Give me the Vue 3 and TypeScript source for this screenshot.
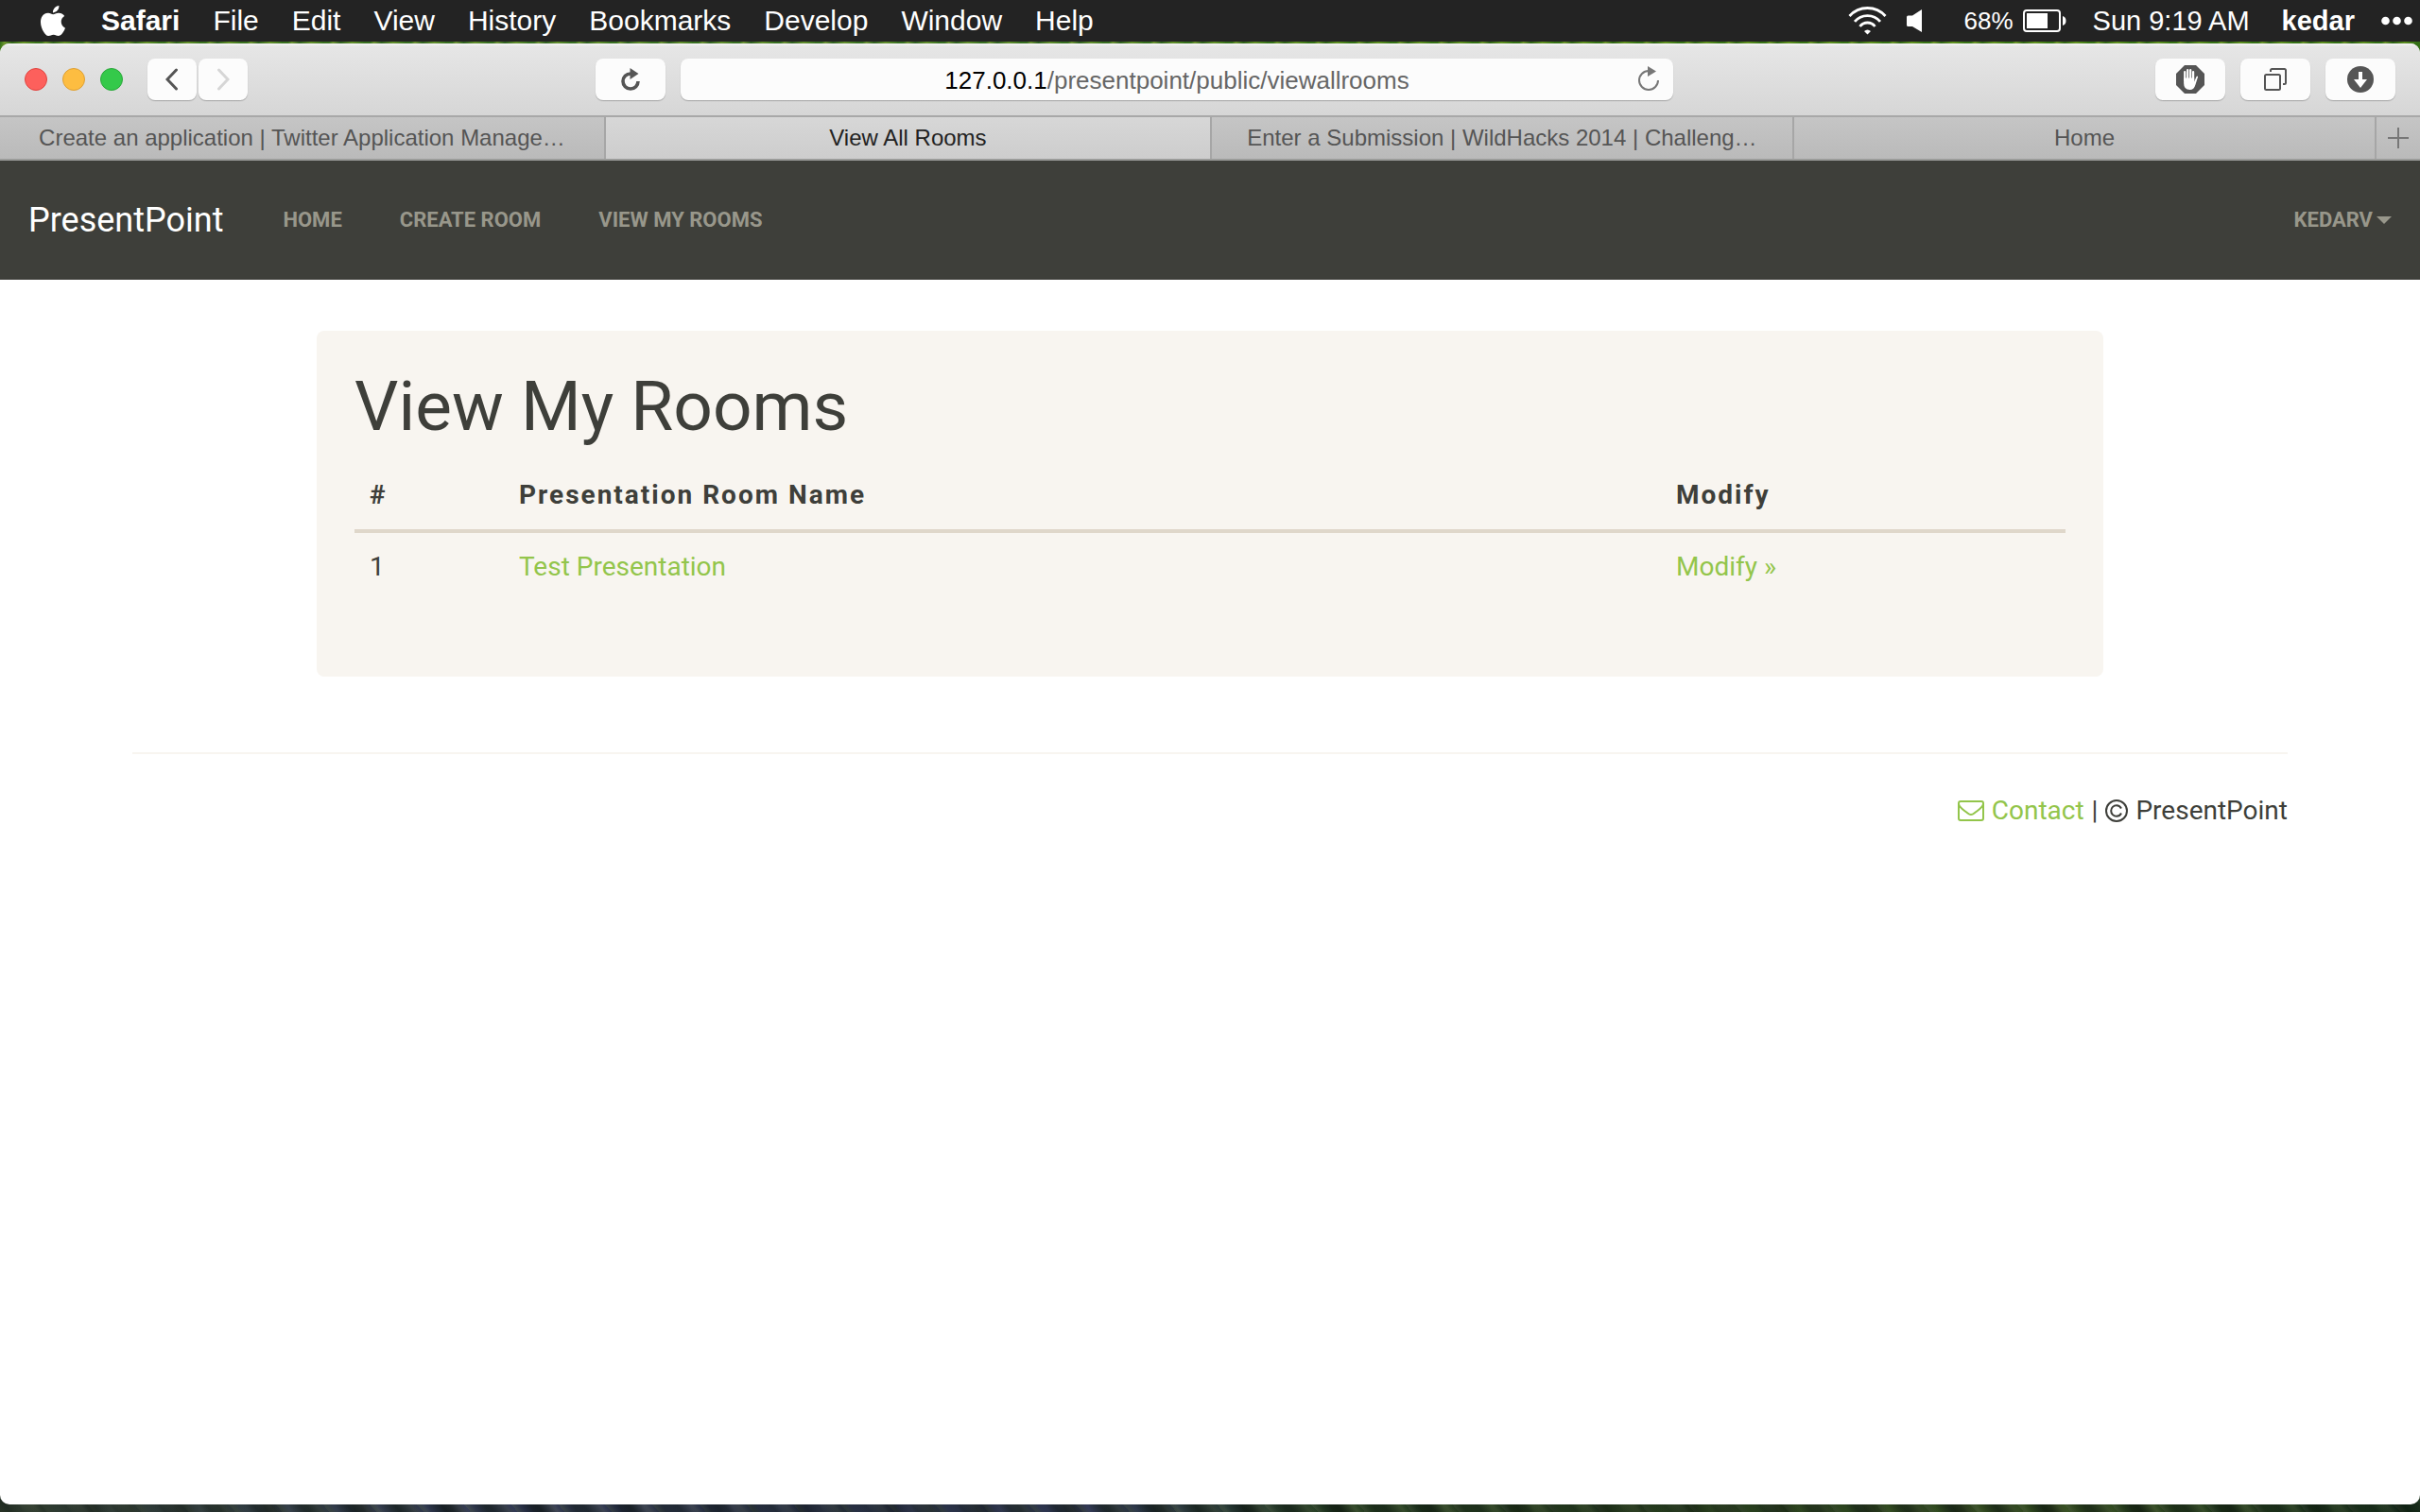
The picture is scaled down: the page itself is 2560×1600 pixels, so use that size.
<script setup lang="ts">
import { ref } from 'vue'

interface Tab {
  title: string
  size: 'wide' | 'narrow'
}

interface Room {
  id: number
  name: string
}

const menus: string[] = ['File', 'Edit', 'View', 'History', 'Bookmarks', 'Develop', 'Window', 'Help']

const tabs: Tab[] = [
  { title: 'Create an application | Twitter Application Manage…', size: 'wide' },
  { title: 'View All Rooms', size: 'wide' },
  { title: 'Enter a Submission | WildHacks 2014 | Challeng…', size: 'narrow' },
  { title: 'Home', size: 'narrow' },
]
const activeTab = ref(1)

const path = ref('/presentpoint/public/viewallrooms')

const navLinks: string[] = ['Home', 'Create Room', 'View My Rooms']

const rooms: Room[] = [{ id: 1, name: 'Test Presentation' }]
</script>

<template>
  <div class="desktop">
    <header class="menubar">
      <nav class="menus" aria-label="Application menu">
        <button class="menu apple" type="button" aria-label="Apple menu">
          <svg width="32" height="32" viewBox="0 0 24 24" fill="#fff">
            <path d="M12.152 6.896c-.948 0-2.415-1.078-3.96-1.04-2.04.027-3.91 1.183-4.961 3.014-2.117 3.675-.546 9.103 1.519 12.09 1.013 1.454 2.208 3.09 3.792 3.039 1.52-.065 2.09-.987 3.935-.987 1.831 0 2.35.987 3.96.948 1.637-.026 2.676-1.48 3.676-2.948 1.156-1.688 1.636-3.325 1.662-3.415-.039-.013-3.182-1.221-3.22-4.857-.026-3.04 2.48-4.494 2.597-4.559-1.429-2.09-3.623-2.324-4.39-2.376-2-.156-3.675 1.09-4.61 1.09zM15.53 3.83c.843-1.012 1.4-2.427 1.245-3.83-1.207.052-2.662.805-3.532 1.818-.78.896-1.454 2.338-1.273 3.714 1.338.104 2.715-.688 3.559-1.701" />
          </svg>
        </button>
        <button class="menu app-name" type="button">Safari</button>
        <button v-for="menu in menus" :key="menu" class="menu" type="button">{{ menu }}</button>
      </nav>
      <div class="status">
        <svg class="wifi" width="41" height="30" viewBox="0 0 41 30" fill="none" stroke="#fff" stroke-width="2.8">
          <path d="M1.500 10A25.500 25.500 0 0 1 39.500 10" />
          <path d="M7 15.900A17.500 17.500 0 0 1 34 15.900" />
          <path d="M12.500 21A10 10 0 0 1 28.500 21" />
          <path d="M17 26q3.500-3 7 0l-3.500 3.500z" fill="#fff" stroke="none" />
        </svg>
        <svg class="speaker" width="16" height="24" viewBox="0 0 16 24" fill="#fff">
          <path d="M1.500 6.500H6L16 0v24L6 18H1.500Q0 18 0 16.500V8Q0 6.500 1.500 6.500z" />
        </svg>
        <span class="charge">68%</span>
        <svg class="battery" width="46" height="24" viewBox="0 0 46 24">
          <rect x="1" y="1" width="38" height="22" rx="3" fill="none" stroke="#fff" stroke-width="2" />
          <rect x="4" y="4" width="22" height="16" fill="#fff" />
          <path d="M42 7q3.500 1 3.500 5t-3.500 5z" fill="#fff" />
        </svg>
        <span class="clock">Sun 9:19 AM</span>
        <span class="user">kedar</span>
        <svg width="33" height="10" viewBox="0 0 33 10" fill="#fff">
          <circle cx="4.500" cy="5" r="4.300" /><circle cx="16.500" cy="5" r="4.300" /><circle cx="28.500" cy="5" r="4.300" />
        </svg>
      </div>
    </header>

    <div class="window">
      <div class="toolbar">
        <div class="tools-left">
          <div class="lights">
            <button class="light close" type="button" aria-label="Close"></button>
            <button class="light minimize" type="button" aria-label="Minimize"></button>
            <button class="light zoom" type="button" aria-label="Zoom"></button>
          </div>
          <div class="history">
            <button class="tool nav-step" type="button" aria-label="Back">
              <svg width="14" height="24" viewBox="0 0 14 24" fill="none" stroke="#555" stroke-width="3" stroke-linecap="round"><path d="M11.500 2 2 12 11.500 22" /></svg>
            </button>
            <button class="tool nav-step" type="button" aria-label="Forward" disabled>
              <svg width="14" height="24" viewBox="0 0 14 24" fill="none" stroke="#d6d6d6" stroke-width="3" stroke-linecap="round"><path d="M2.500 2 12 12 2.500 22" /></svg>
            </button>
          </div>
        </div>

        <div class="tools-center">
          <button class="tool" type="button" aria-label="Reload page">
            <svg width="20" height="24" viewBox="0 0 20 24">
              <path d="M10 6A8 8 0 1 0 18 14" fill="none" stroke="#555" stroke-width="3.600" />
              <path d="M9.500 0 18.500 6 9.500 12z" fill="#555" />
            </svg>
          </button>
          <div class="address">
            <div class="address-text">
              <label for="path">127.0.0.1</label>
              <input id="path" v-model="path" type="text" spellcheck="false" />
            </div>
            <button class="address-reload" type="button" aria-label="Reload">
              <svg width="22" height="28" viewBox="0 0 22 28">
                <path d="M11 5A10 10 0 1 0 21 15" fill="none" stroke="#777" stroke-width="2" />
                <path d="M10 0 19 5.500 10 11z" fill="#777" />
              </svg>
            </button>
          </div>
        </div>

        <div class="tools-right">
          <button class="tool" type="button" aria-label="AdBlock">
            <svg width="30" height="30" viewBox="0 0 30 30">
              <path d="M9 0H21L30 9V21L21 30H9L0 21V9z" fill="#555" />
              <g stroke="#fff" stroke-width="2.200" stroke-linecap="round">
                <path d="M9.200 7V16M12.200 5V16M15.200 5V16M18.100 7V16" />
              </g>
              <path d="M8.100 13.500H19.200V17.500L21.300 12.400Q22.300 10.800 23.100 12.200L20.500 20.500Q19 26 14.500 26Q8.100 26 8.100 19z" fill="#fff" />
            </svg>
          </button>
          <button class="tool" type="button" aria-label="Show all tabs">
            <svg width="24" height="24" viewBox="0 0 24 24" fill="none" stroke="#555" stroke-width="2">
              <rect x="1" y="7" width="16" height="16" rx="1.500" />
              <path d="M7 4V2.500Q7 1 8.500 1H21.500Q23 1 23 2.500V15.500Q23 17 21.500 17H20" />
            </svg>
          </button>
          <button class="tool" type="button" aria-label="Downloads">
            <svg width="28" height="28" viewBox="0 0 28 28">
              <circle cx="14" cy="14" r="14" fill="#555" />
              <path d="M12 6h4v8h5l-7 9-7-9h5z" fill="#fff" />
            </svg>
          </button>
        </div>
      </div>

      <div class="tabbar" role="tablist">
        <button
          v-for="(tab, i) in tabs"
          :key="tab.title"
          class="tab"
          :class="[tab.size, { active: i === activeTab }]"
          type="button"
          role="tab"
          :aria-selected="i === activeTab"
          @click="activeTab = i"
        >
          {{ tab.title }}
        </button>
        <button class="new-tab" type="button" aria-label="New tab">
          <svg width="22" height="22" viewBox="0 0 22 22" stroke="#777" stroke-width="2"><path d="M11 0V22M0 11H22" /></svg>
        </button>
      </div>

      <div class="page">
        <nav class="navbar" aria-label="Site">
          <a class="brand" href="#">PresentPoint</a>
          <div class="nav-links">
            <a v-for="link in navLinks" :key="link" href="#">{{ link }}</a>
          </div>
          <button class="account" type="button" aria-haspopup="menu">
            Kedarv<span class="caret"></span>
          </button>
        </nav>

        <main class="well">
          <h1>View My Rooms</h1>
          <table>
            <colgroup>
              <col class="col-number" />
              <col />
              <col class="col-modify" />
            </colgroup>
            <thead>
              <tr>
                <th scope="col">#</th>
                <th scope="col">Presentation Room Name</th>
                <th scope="col">Modify</th>
              </tr>
            </thead>
            <tbody>
              <tr v-for="room in rooms" :key="room.id">
                <td>{{ room.id }}</td>
                <td><a href="#">{{ room.name }}</a></td>
                <td><a href="#">Modify »</a></td>
              </tr>
            </tbody>
          </table>
        </main>

        <footer class="footer">
          <a class="contact" href="#">
            <svg width="28" height="22" viewBox="0 0 28 22" fill="none" stroke="#93c54b" stroke-width="2">
              <rect x="1" y="1" width="26" height="20" rx="2" />
              <path d="M1 4C2 8 7 10.500 10.500 13.500Q14 16.500 17.500 13.500C21 10.500 26 8 27 4" />
            </svg>
            <span>Contact</span>
          </a>
          <span>|</span>
          <svg width="24" height="24" viewBox="0 0 24 24" fill="none" stroke="#3e3f3a" stroke-width="2">
            <circle cx="12" cy="12" r="11" />
            <path d="M17 9.500C16 7.500 14.500 6.200 12 6.200A5.800 5.800 0 0 0 12 17.800C14.500 17.800 16 16.500 17 14.500" />
          </svg>
          <span>PresentPoint</span>
        </footer>
      </div>
    </div>
  </div>
</template>

<style>
body {
  margin: 0;
}
</style>

<style scoped>
/* The backgrounds draw the grassy wallpaper that shows above and below the window. */
.desktop {
  display: flex;
  flex-direction: column;
  min-height: 100vh;
  box-sizing: border-box;
  padding-bottom: 8px;
  font-family: 'Liberation Sans', Arial, sans-serif;
  background:
    repeating-linear-gradient(98deg, #3a7d14cc 0 7px, #79a82acc 11px, #2f6a14cc 19px, #6fa522cc 31px, #3f8216cc 43px) top / 100% 60px no-repeat,
    repeating-linear-gradient(62deg, #0d150f88 0 9px, #4a574422 23px, #15201788 41px, #2f403622 67px, #0f181688 83px) bottom / 100% 24px no-repeat,
    repeating-linear-gradient(48deg, #5a664c55 0 2px, #10181200 7px, #10181266 19px, #6a705044 31px, #10181200 37px) bottom / 100% 24px no-repeat,
    linear-gradient(90deg, #3b4a3a, #30365a 20%, #30365a 45%, #24401f 55%, #34501c 85%, #123018);
}

button {
  border: 0;
  padding: 0;
  margin: 0;
  background: none;
  font: inherit;
  color: inherit;
}

a {
  text-decoration: none;
}

svg {
  display: block;
  flex: none;
}

.menubar {
  display: flex;
  align-items: center;
  justify-content: space-between;
  height: 44px;
  padding: 0 8px 0 40px;
  background: #232323;
  color: #fff;
  font-size: 30px;
  line-height: 44px;
  white-space: nowrap;
}

.menus {
  display: flex;
  align-items: center;
  gap: 35px;
}

.menu {
  display: block;
}

.apple {
  height: 36px;
}

.app-name,
.user {
  font-weight: bold;
}

.status {
  display: flex;
  align-items: center;
}

.speaker {
  margin-left: 21px;
}

.charge {
  margin-left: 45px;
  font-size: 26px;
}

.battery {
  margin-left: 10px;
}

.clock {
  margin-left: 28px;
  font-size: 29px;
}

.user {
  margin: 0 28px 0 34px;
  font-size: 29px;
}

.window {
  display: flex;
  flex: 1;
  flex-direction: column;
  margin-top: 2px;
  overflow: hidden;
  border-radius: 10px;
  background: #fff;
}

.toolbar {
  display: grid;
  grid-template-columns: 630fr 1140fr 790fr;
  align-items: center;
  height: 76px;
  border-bottom: 2px solid #a8a8a8;
  background: linear-gradient(#f3f3f3 0 1px, #e6e6e6 3px, #d6d6d6);
}

.tools-left,
.lights,
.history,
.tools-center,
.tools-right {
  display: flex;
  align-items: center;
}

.tools-left {
  gap: 26px;
  padding-left: 26px;
}

.lights {
  gap: 16px;
}

.light {
  box-sizing: border-box;
  width: 24px;
  height: 24px;
  border: 1px solid;
  border-radius: 50%;
}

.close {
  border-color: #e0443f;
  background: #fd605c;
}

.minimize {
  border-color: #dea034;
  background: #fdbd41;
}

.zoom {
  border-color: #2aa73a;
  background: #34c94a;
}

.history {
  gap: 2px;
}

.tool {
  display: flex;
  align-items: center;
  justify-content: center;
  flex: none;
  width: 74px;
  height: 44px;
  border-radius: 8px;
  background: #fcfcfc;
  box-shadow: 0 1px 1px #0000003d;
}

.nav-step {
  width: 52px;
}

.tools-center,
.tools-right {
  gap: 16px;
}

.tools-right {
  justify-content: flex-end;
  padding-right: 26px;
}

.address {
  display: flex;
  align-items: center;
  flex: 1;
  height: 44px;
  padding: 0 15px 0 37px;
  border-radius: 8px;
  background: #fcfcfc;
  box-shadow: 0 1px 1px #0000003d;
  font-size: 26px;
}

.address-text {
  display: flex;
  flex: 1;
  justify-content: center;
  padding-top: 2px;
  line-height: 30px;
}

.address-text label {
  color: #000;
}

.address-text input {
  field-sizing: content;
  height: 30px;
  padding: 0;
  border: 0;
  outline: 0;
  background: none;
  color: #666;
  font: inherit;
  line-height: 30px;
}

.tabbar {
  display: flex;
  height: 44px;
  border-bottom: 2px solid #9b9c9a;
  background: linear-gradient(#c5c5c5, #bababa);
  color: #555;
  font-size: 24px;
  line-height: 44px;
}

.tab {
  flex: 616 1 0;
  min-width: 0;
  border-right: 2px solid #a6a6a6;
  overflow: hidden;
  white-space: nowrap;
}

.tab.wide {
  flex-grow: 641;
}

.tab.active {
  background: linear-gradient(#d7d7d7, #cdcdcd);
  color: #222;
}

.new-tab {
  display: flex;
  align-items: center;
  justify-content: center;
  width: 46px;
}

.page {
  color: #3e3f3a;
  font-family: Roboto, sans-serif;
  font-size: 28px;
  line-height: 40px;
}

.navbar {
  display: flex;
  align-items: center;
  height: 126px;
  padding: 0 30px;
  background: #3e3f3a;
  color: #98978b;
  font-size: 22px;
  font-weight: 700;
  text-transform: uppercase;
}

.brand {
  color: #fff;
  font-size: 36px;
  font-weight: 400;
  text-transform: none;
}

.nav-links {
  display: flex;
  gap: 61px;
  margin-left: 63px;
}

.nav-links a {
  color: inherit;
}

.account {
  display: flex;
  align-items: center;
  gap: 4px;
  margin-left: auto;
  text-transform: inherit;
}

.caret {
  border: 8px solid transparent;
  border-top-color: #98978b;
  border-bottom: 0;
}

.well {
  box-sizing: border-box;
  max-width: 1890px;
  margin: 54px auto 0;
  padding: 40px 40px 80px;
  border-radius: 8px;
  background: #f8f5f0;
}

h1 {
  margin: 0 0 18px;
  font-size: 73px;
  font-weight: 400;
  line-height: 80px;
}

table {
  width: 100%;
  border-collapse: collapse;
  table-layout: fixed;
}

.col-number {
  width: 158px;
}

.col-modify {
  width: 428px;
}

th,
td {
  padding: 16px;
  text-align: left;
}

th {
  letter-spacing: 2px;
}

tbody {
  border-top: 4px solid #dfd7ca;
}

td a,
.contact {
  color: #93c54b;
}

.footer {
  display: flex;
  align-items: center;
  justify-content: flex-end;
  gap: 8px;
  max-width: 2280px;
  margin: 80px auto 0;
  padding-top: 40px;
  border-top: 2px solid #f8f5f0;
}

.contact {
  display: flex;
  align-items: center;
  gap: 8px;
}
</style>
